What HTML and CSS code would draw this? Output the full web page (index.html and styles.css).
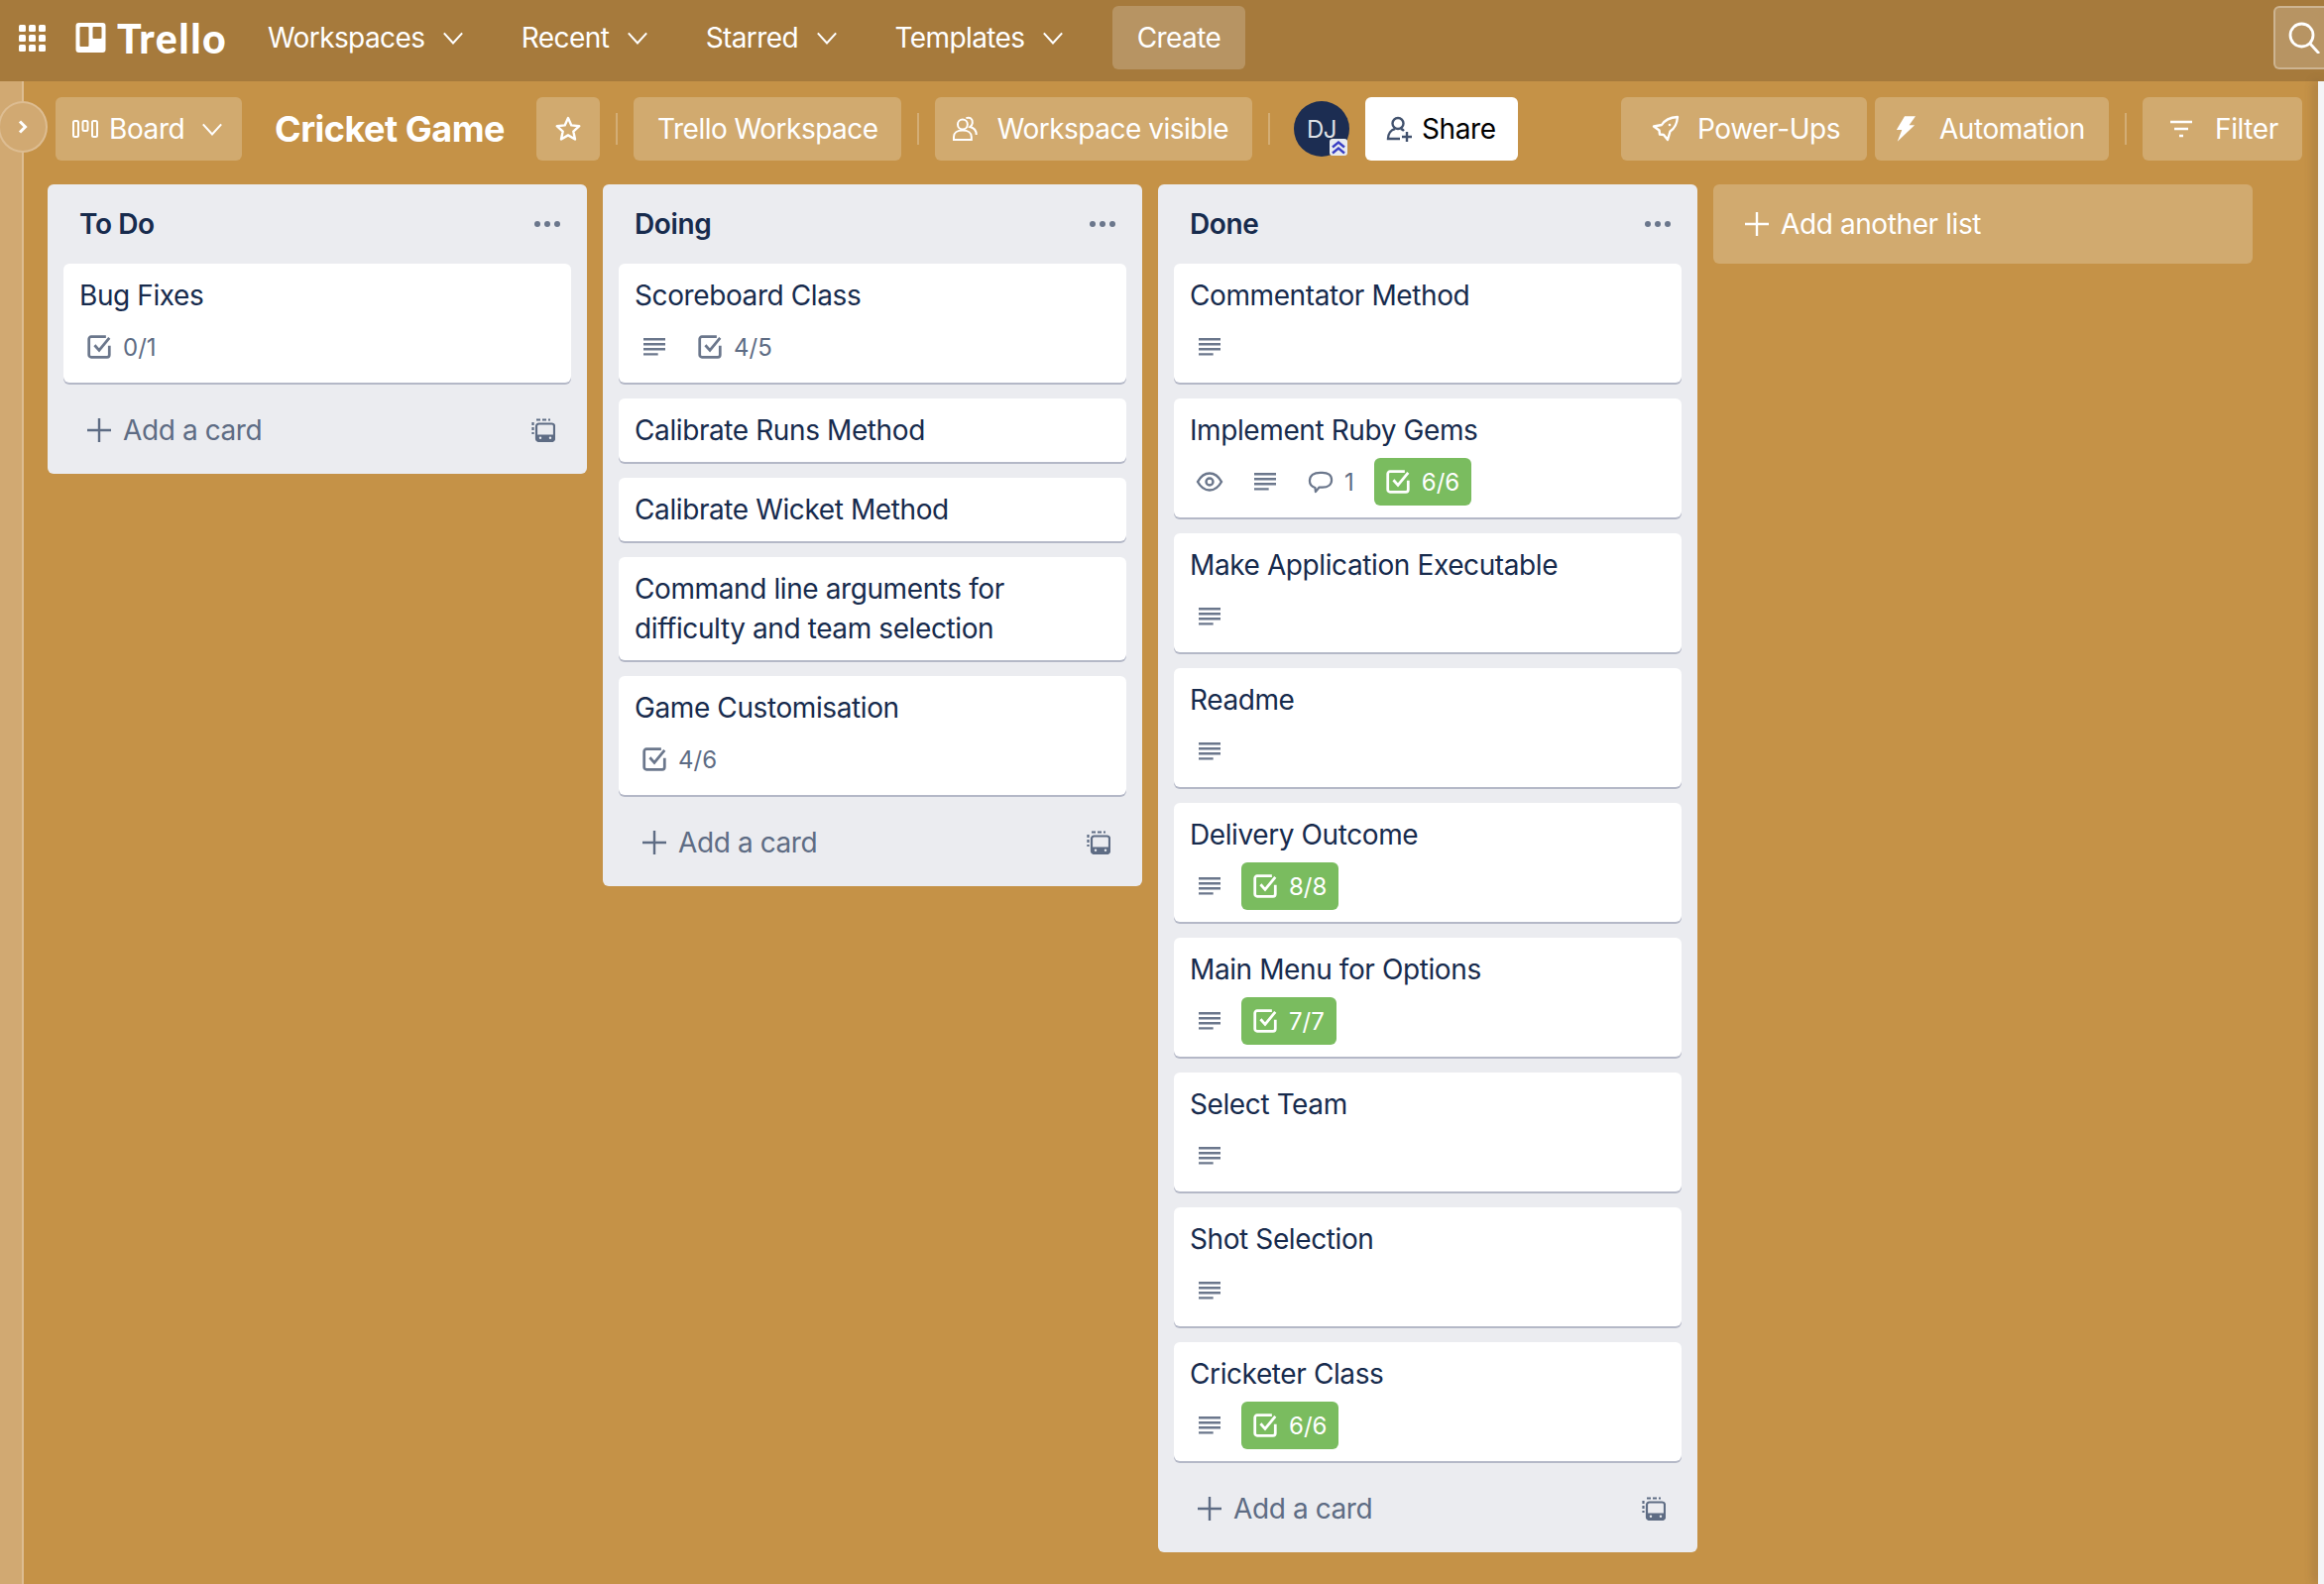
FILE: index.html
```html
<!DOCTYPE html>
<html>
<head>
    <title>Cricket Game | Trello</title>
    <link rel="stylesheet" href="styles.css">
</head>
<body>
    <!-- Shared icons -->
    <svg class="iconDefs" width="0" height="0">
        <symbol id="i-chevron" viewBox="0 0 24 24"><path d="M2 7l10 11L22 7" fill="none" stroke="currentColor" stroke-width="2.2"/></symbol>
        <symbol id="i-check" viewBox="1.500 1.500 21 21"><path d="M21 11v8a2 2 0 0 1-2 2H5a2 2 0 0 1-2-2V5a2 2 0 0 1 2-2h13" fill="none" stroke="currentColor" stroke-width="2.400"/><path d="M8 10.500l4 4.500 9-11" fill="none" stroke="currentColor" stroke-width="2.400"/></symbol>
        <symbol id="i-lines" viewBox="0 0 24 24"><path d="M0 3.500h24M0 9h24M0 14.500h24M0 20h16" fill="none" stroke="currentColor" stroke-width="2.600"/></symbol>
        <symbol id="i-plus" viewBox="0 0 24 24"><path d="M12 0v24M0 12h24" fill="none" stroke="currentColor" stroke-width="2.400" /></symbol>
        <symbol id="i-template" viewBox="0 0 24 24"><path d="M5 1.500h14" fill="none" stroke="currentColor" stroke-width="2.200" stroke-dasharray="4 2"/><path d="M1.500 4v12" fill="none" stroke="currentColor" stroke-width="2.200" stroke-dasharray="3 2"/><path d="M7.500 5.500h13a2.500 2.500 0 0 1 2.500 2.500v12.500a2.500 2.500 0 0 1-2.500 2.500h-13a2.500 2.500 0 0 1-2.500-2.500V8a2.500 2.500 0 0 1 2.500-2.500z" fill="none" stroke="currentColor" stroke-width="2.200"/><path d="M5 16.500h18V21a2 2 0 0 1-2 2H7a2 2 0 0 1-2-2z" fill="currentColor"/><circle cx="9" cy="19.800" r="1.200" fill="#ebecf0"/><circle cx="19" cy="19.800" r="1.200" fill="#ebecf0"/></symbol>
    </svg>

    <!-- Top navigation -->
    <header class="topNav">
        <svg class="gridIcon" viewBox="0 0 27 27"><g fill="#fff"><rect x="0" y="0" width="7" height="7" rx="1.500"/><rect x="10" y="0" width="7" height="7" rx="1.500"/><rect x="20" y="0" width="7" height="7" rx="1.500"/><rect x="0" y="10" width="7" height="7" rx="1.500"/><rect x="10" y="10" width="7" height="7" rx="1.500"/><rect x="20" y="10" width="7" height="7" rx="1.500"/><rect x="0" y="20" width="7" height="7" rx="1.500"/><rect x="10" y="20" width="7" height="7" rx="1.500"/><rect x="20" y="20" width="7" height="7" rx="1.500"/></g></svg>
        <div class="logo">
            <svg class="logoMark" viewBox="0 0 30 30"><path fill="#fff" fill-rule="evenodd" d="M3 0h24a3 3 0 0 1 3 3v24a3 3 0 0 1-3 3H3a3 3 0 0 1-3-3V3a3 3 0 0 1 3-3zm2 4a1 1 0 0 0-1 1v18a1 1 0 0 0 1 1h7a1 1 0 0 0 1-1V5a1 1 0 0 0-1-1zm13 0a1 1 0 0 0-1 1v10a1 1 0 0 0 1 1h7a1 1 0 0 0 1-1V5a1 1 0 0 0-1-1z"/></svg>
            <span class="logoText">Trello</span>
        </div>
        <nav class="navMenu">
            <a class="navItem">Workspaces <svg class="chev"><use href="#i-chevron"/></svg></a>
            <a class="navItem">Recent <svg class="chev"><use href="#i-chevron"/></svg></a>
            <a class="navItem">Starred <svg class="chev"><use href="#i-chevron"/></svg></a>
            <a class="navItem">Templates <svg class="chev"><use href="#i-chevron"/></svg></a>
            <a class="createBtn">Create</a>
        </nav>
        <div class="searchBtn">
            <svg viewBox="0 0 32 32" width="32" height="32"><circle cx="13.500" cy="13.500" r="11.500" fill="none" stroke="#fff" stroke-width="2.800"/><path d="M22 22l9 10" fill="none" stroke="#fff" stroke-width="2.800"/></svg>
        </div>
    </header>

    <div class="workArea">
        <!-- Collapsed sidebar -->
        <aside class="sideStrip">
            <div class="sideToggle">
                <svg viewBox="0 0 10 14" width="10" height="14"><path d="M2 1.500L7.500 7 2 12.500" fill="none" stroke="#fff" stroke-width="3"/></svg>
            </div>
        </aside>

        <main class="boardMain">
            <!-- Board header -->
            <div class="boardBar">
                <div class="barBtn boardBtn">
                    <svg class="boardIcon" viewBox="0 0 26 18"><g fill="none" stroke="#fff" stroke-width="2"><rect x="1" y="1" width="5" height="16" rx="1.500"/><rect x="10.500" y="1" width="5" height="10" rx="1.500"/><rect x="20" y="1" width="5" height="16" rx="1.500"/></g></svg>
                    Board
                    <svg class="chev"><use href="#i-chevron"/></svg>
                </div>
                <h1 class="boardTitle">Cricket Game</h1>
                <div class="barBtn starBtn">
                    <svg viewBox="0 0 28 28" width="28" height="28"><path d="M14 3l3.300 7.400 8 .8-6 5.400 1.700 7.900-7-4.100-7 4.100 1.700-7.900-6-5.400 8-.8z" fill="none" stroke="#fff" stroke-width="2.400" stroke-linejoin="round"/></svg>
                </div>
                <span class="barDivider"></span>
                <div class="barBtn workspaceBtn">Trello Workspace</div>
                <span class="barDivider"></span>
                <div class="barBtn visibleBtn">
                    <svg viewBox="2 2 25 25" width="28" height="28"><g fill="none" stroke="#fff" stroke-width="2"><circle cx="12" cy="10" r="5"/><path d="M3 25.500v-3c0-4 3.500-6.500 9-6.500s9 2.500 9 6.500v3z"/><path d="M15.500 3.500c4-1.500 7 1 6.500 5-.2 2-1.200 3-2.500 4 4 1 6.500 3.500 6.500 8"/></g></svg>
                    Workspace visible
                </div>
                <span class="barDivider"></span>
                <div class="avatar">
                    DJ
                    <span class="avatarBadge">
                        <svg viewBox="0 0 18 18" width="18" height="18"><path d="M3 8.500l6-5 6 5M3 14.500l6-5 6 5" fill="none" stroke="#3a3fc4" stroke-width="2.400"/></svg>
                    </span>
                </div>
                <div class="shareBtn">
                    <svg viewBox="0 0 28 28" width="28" height="28"><g fill="none" stroke="#42526e" stroke-width="2.400"><circle cx="13" cy="8.500" r="5.500"/><path d="M10 14c-4 1-7 5-7 10h12M16 14c1 .3 2 1 3 2"/><path d="M22 17v10M17 22h10"/></g></svg>
                    Share
                </div>
                <div class="barBtn powerBtn">
                    <svg viewBox="0 0 28 28" width="28" height="28"><path d="M26 2c-7 .5-13 3-16 8l-8 1.500 5.500 4 .5 4 4 .5 4 5 2.500-8.500c5-3 7-9 7.500-14.500z" fill="none" stroke="#fff" stroke-width="2.400" stroke-linejoin="round"/><circle cx="18" cy="10" r="1.300" fill="#fff"/></svg>
                    Power-Ups
                </div>
                <div class="barBtn autoBtn">
                    <svg viewBox="0 0 24 28" width="24" height="28"><path d="M11 0h12l-7 10h6L3 28l5-13H2z" fill="#fff"/></svg>
                    Automation
                </div>
                <span class="barDivider"></span>
                <div class="barBtn filterBtn">
                    <svg viewBox="0 0 24 24" width="24" height="24"><path d="M1 5h22M5 12h14M10 19h4" fill="none" stroke="#fff" stroke-width="2.400"/></svg>
                    Filter
                </div>
            </div>

            <!-- Lists -->
            <div class="lists">
                <section class="list">
                    <div class="listHead"><h2>To Do</h2><span class="dots"><i></i><i></i><i></i></span></div>
                    <div class="card">
                        <p>Bug Fixes</p>
                        <div class="badges">
                            <span class="badge"><svg class="ico"><use href="#i-check"/></svg>0/1</span>
                        </div>
                    </div>
                    <div class="addCard"><svg class="plus"><use href="#i-plus"/></svg>Add a card<svg class="tmpl"><use href="#i-template"/></svg></div>
                </section>

                <section class="list">
                    <div class="listHead"><h2>Doing</h2><span class="dots"><i></i><i></i><i></i></span></div>
                    <div class="card">
                        <p>Scoreboard Class</p>
                        <div class="badges">
                            <span class="badge"><svg class="ico lines"><use href="#i-lines"/></svg></span>
                            <span class="badge"><svg class="ico"><use href="#i-check"/></svg>4/5</span>
                        </div>
                    </div>
                    <div class="card"><p>Calibrate Runs Method</p></div>
                    <div class="card"><p>Calibrate Wicket Method</p></div>
                    <div class="card"><p>Command line arguments for<br>difficulty and team selection</p></div>
                    <div class="card">
                        <p>Game Customisation</p>
                        <div class="badges">
                            <span class="badge"><svg class="ico"><use href="#i-check"/></svg>4/6</span>
                        </div>
                    </div>
                    <div class="addCard"><svg class="plus"><use href="#i-plus"/></svg>Add a card<svg class="tmpl"><use href="#i-template"/></svg></div>
                </section>

                <section class="list">
                    <div class="listHead"><h2>Done</h2><span class="dots"><i></i><i></i><i></i></span></div>
                    <div class="card">
                        <p>Commentator Method</p>
                        <div class="badges"><span class="badge"><svg class="ico lines"><use href="#i-lines"/></svg></span></div>
                    </div>
                    <div class="card">
                        <p>Implement Ruby Gems</p>
                        <div class="badges">
                            <span class="badge">
                                <svg class="ico wideIco" viewBox="0 0 28 24"><g fill="none" stroke="currentColor" stroke-width="2.400"><path d="M2 12c3-5.500 7-8.500 12-8.500s9 3 12 8.500c-3 5.500-7 8.500-12 8.500S5 17.500 2 12z"/><circle cx="14" cy="12" r="3.500"/></g></svg>
                            </span>
                            <span class="badge"><svg class="ico lines"><use href="#i-lines"/></svg></span>
                            <span class="badge commentBadge">
                                <svg class="ico wideIco" viewBox="0 0 28 26"><path d="M8 19.500C4.500 18.500 2 16 2 12 2 6 6.500 3 13.500 3H16c6 0 10 3 10 8s-4 8-10 8h-3.500L8.500 24z" fill="none" stroke="currentColor" stroke-width="2.400" stroke-linejoin="round"/></svg>1
                            </span>
                            <span class="badge done"><svg class="ico"><use href="#i-check"/></svg>6/6</span>
                        </div>
                    </div>
                    <div class="card">
                        <p>Make Application Executable</p>
                        <div class="badges"><span class="badge"><svg class="ico lines"><use href="#i-lines"/></svg></span></div>
                    </div>
                    <div class="card">
                        <p>Readme</p>
                        <div class="badges"><span class="badge"><svg class="ico lines"><use href="#i-lines"/></svg></span></div>
                    </div>
                    <div class="card">
                        <p>Delivery Outcome</p>
                        <div class="badges">
                            <span class="badge"><svg class="ico lines"><use href="#i-lines"/></svg></span>
                            <span class="badge done"><svg class="ico"><use href="#i-check"/></svg>8/8</span>
                        </div>
                    </div>
                    <div class="card">
                        <p>Main Menu for Options</p>
                        <div class="badges">
                            <span class="badge"><svg class="ico lines"><use href="#i-lines"/></svg></span>
                            <span class="badge done"><svg class="ico"><use href="#i-check"/></svg>7/7</span>
                        </div>
                    </div>
                    <div class="card">
                        <p>Select Team</p>
                        <div class="badges"><span class="badge"><svg class="ico lines"><use href="#i-lines"/></svg></span></div>
                    </div>
                    <div class="card">
                        <p>Shot Selection</p>
                        <div class="badges"><span class="badge"><svg class="ico lines"><use href="#i-lines"/></svg></span></div>
                    </div>
                    <div class="card">
                        <p>Cricketer Class</p>
                        <div class="badges">
                            <span class="badge"><svg class="ico lines"><use href="#i-lines"/></svg></span>
                            <span class="badge done"><svg class="ico"><use href="#i-check"/></svg>6/6</span>
                        </div>
                    </div>
                    <div class="addCard"><svg class="plus"><use href="#i-plus"/></svg>Add a card<svg class="tmpl"><use href="#i-template"/></svg></div>
                </section>

                <div class="addList"><svg class="plus"><use href="#i-plus"/></svg>Add another list</div>
            </div>
        </main>
        <div class="edgeStrip"></div>
    </div>
</body>
</html>
```

FILE: styles.css
```css
* {
    box-sizing: border-box;
}

html, body {
    margin: 0;
    height: 100%;
}

body {
    width: 2344px;
    height: 1598px;
    overflow: hidden;
    display: flex;
    flex-direction: column;
    background-color: #c59247;
    color: #172b4d;
    font-family: Inter, "Liberation Sans", sans-serif;
    font-size: 28px;
    letter-spacing: -0.4px;
}

.iconDefs {
    position: absolute;
}

/* Top navigation */
.topNav {
    height: 82px;
    flex: none;
    display: flex;
    align-items: center;
    padding-bottom: 6px;
    background-color: #a67a3c;
    color: #fff;
}

.gridIcon {
    width: 27px;
    height: 27px;
    margin-left: 19px;
}

.logo {
    display: flex;
    align-items: center;
    margin-left: 30px;
}

.logoMark {
    width: 31px;
    height: 30px;
}

.logoText {
    width: 108px;
    margin: 2px 0 0 11px;
    font-family: Lato, sans-serif;
    font-weight: 900;
    font-size: 41px;
    letter-spacing: 1.5px;
    line-height: 40px;
}

.navMenu {
    display: flex;
    align-items: center;
    margin-left: 44px;
    letter-spacing: -0.6px;
}

.navItem {
    display: flex;
    align-items: center;
    gap: 18px;
    margin-right: 57.5px;
}

.chev {
    width: 22px;
    height: 22px;
    color: #fff;
}

.createBtn {
    height: 64px;
    width: 134px;
    margin-left: -9px;
    display: flex;
    align-items: center;
    justify-content: center;
    border-radius: 6px;
    background-color: rgba(255, 255, 255, 0.2);
}

.searchBtn {
    margin-left: auto;
    width: 51px;
    height: 64px;
    padding-left: 13px;
    display: flex;
    align-items: center;
    background-color: rgba(255, 255, 255, 0.2);
    border: 2px solid rgba(255, 255, 255, 0.3);
    border-right: none;
    border-radius: 6px 0 0 6px;
}

/* Work area */
.workArea {
    flex: 1;
    display: flex;
    min-height: 0;
}

.sideStrip {
    position: relative;
    width: 24px;
    flex: none;
    background-color: #d1a972;
    border-right: 2px solid #ddbd92;
}

.sideToggle {
    position: absolute;
    left: -2px;
    top: 20px;
    width: 50px;
    height: 52px;
    display: flex;
    align-items: center;
    justify-content: center;
    border-radius: 50%;
    background-color: #d1a972;
    border: 2px solid #ddbd92;
}

.boardMain {
    flex: 1;
    min-width: 0;
}

.edgeStrip {
    width: 6px;
    flex: none;
    background-color: #f4f5f7;
    box-shadow: -4px 0 10px rgba(90, 70, 60, 0.3);
}

/* Board header */
.boardBar {
    display: flex;
    align-items: center;
    height: 64px;
    margin-top: 16px;
    padding-left: 32px;
}

.barBtn {
    height: 64px;
    display: flex;
    align-items: center;
    padding: 0 24px;
    border-radius: 6px;
    color: #fff;
    background-color: rgba(255, 255, 255, 0.22);
    white-space: nowrap;
}

.boardBtn {
    width: 188px;
    padding: 0 17px;
}

.boardIcon {
    width: 26px;
    height: 18px;
    margin-right: 11px;
}

.boardBtn .chev {
    margin-left: 17px;
}

.boardTitle {
    width: 232px;
    margin: 0 32px 0 33px;
    color: #fff;
    font-size: 36px;
    font-weight: 700;
    letter-spacing: -0.5px;
    white-space: nowrap;
}

.starBtn {
    width: 64px;
    padding: 0 18px;
}

.barDivider {
    width: 2px;
    height: 32px;
    margin: 0 16px;
    background-color: rgba(255, 255, 255, 0.25);
}

.workspaceBtn {
    width: 270px;
    letter-spacing: -0.5px;
}

.visibleBtn {
    width: 320px;
    padding-left: 18px;
    letter-spacing: -0.5px;
}

.visibleBtn svg {
    margin-right: 20px;
}

.avatar {
    position: relative;
    width: 56px;
    height: 56px;
    margin: 0 16px 0 8px;
    display: flex;
    align-items: center;
    justify-content: center;
    border-radius: 50%;
    background-color: #1c2d52;
    color: #dfe1e6;
    font-size: 24px;
}

.avatarBadge {
    position: absolute;
    right: 2px;
    bottom: 1px;
    width: 18px;
    height: 17px;
    display: flex;
    align-items: center;
    justify-content: center;
    background-color: #e8ebf0;
    border-radius: 3px;
}

.shareBtn {
    height: 64px;
    width: 154px;
    display: flex;
    align-items: center;
    gap: 9px;
    padding-left: 20px;
    background-color: #fff;
    border-radius: 6px;
    color: #000;
}

.powerBtn {
    margin-left: auto;
    width: 248px;
    padding-left: 31px;
}

.powerBtn svg {
    margin-right: 18px;
}

.autoBtn {
    margin-left: 8px;
    width: 236px;
    padding-left: 20px;
}

.autoBtn svg {
    margin-right: 23px;
}

.filterBtn {
    width: 161px;
    margin-right: 16px;
    padding-left: 27px;
}

.filterBtn svg {
    margin-right: 22px;
}

/* Lists */
.lists {
    display: flex;
    align-items: flex-start;
    gap: 16px;
    margin-top: 24px;
    padding-left: 24px;
}

.list {
    width: 544px;
    flex: none;
    padding: 0 16px 16px;
    background-color: #ebecf0;
    border-radius: 6px;
}

.listHead {
    height: 80px;
    display: flex;
    align-items: center;
    justify-content: space-between;
    padding: 0 11px 0 16px;
}

.listHead h2 {
    margin: 0;
    font-size: 28px;
    font-weight: 600;
}

.dots {
    display: flex;
    gap: 4px;
}

.dots i {
    width: 6px;
    height: 6px;
    border-radius: 50%;
    background-color: #6b778c;
}

.card {
    margin-bottom: 16px;
    padding: 12px 16px;
    background-color: #fff;
    border-radius: 6px;
    box-shadow: 0 2px 0 #b4b8c7;
}

.card p {
    margin: 0;
    line-height: 40px;
}

.badges {
    display: flex;
    align-items: center;
    height: 48px;
    margin-top: 8px;
    color: #5e6c84;
    font-size: 24px;
    letter-spacing: 0;
}

.badge {
    display: flex;
    align-items: center;
    height: 48px;
    margin-right: 16px;
}

.ico {
    width: 24px;
    height: 24px;
    margin: 0 12px 0 8px;
    flex: none;
    color: #6b778c;
}

.ico.lines {
    height: 22px;
    margin-right: 8px;
}

.ico.wideIco {
    width: 28px;
    margin: 0 6px;
}

.commentBadge .ico.wideIco {
    margin-right: 10px;
}

.commentBadge {
    margin-right: 24px;
}

.badge.done {
    margin-left: -4px;
    padding: 0 12px 0 4px;
    border-radius: 6px;
    background-color: #7abc5f;
    color: #fff;
}

.badge.done .ico {
    color: #fff;
}

.addCard {
    height: 56px;
    margin-top: 20px;
    display: flex;
    align-items: center;
    padding: 0 16px 0 24px;
    color: #5e6c84;
}

.plus {
    width: 24px;
    height: 24px;
    margin-right: 12px;
    flex: none;
}

.tmpl {
    width: 24px;
    height: 24px;
    margin-left: auto;
    color: #5e6c84;
}

.addList {
    width: 544px;
    height: 80px;
    flex: none;
    display: flex;
    align-items: center;
    padding-left: 32px;
    border-radius: 6px;
    background-color: rgba(255, 255, 255, 0.22);
    color: #fff;
}
```
